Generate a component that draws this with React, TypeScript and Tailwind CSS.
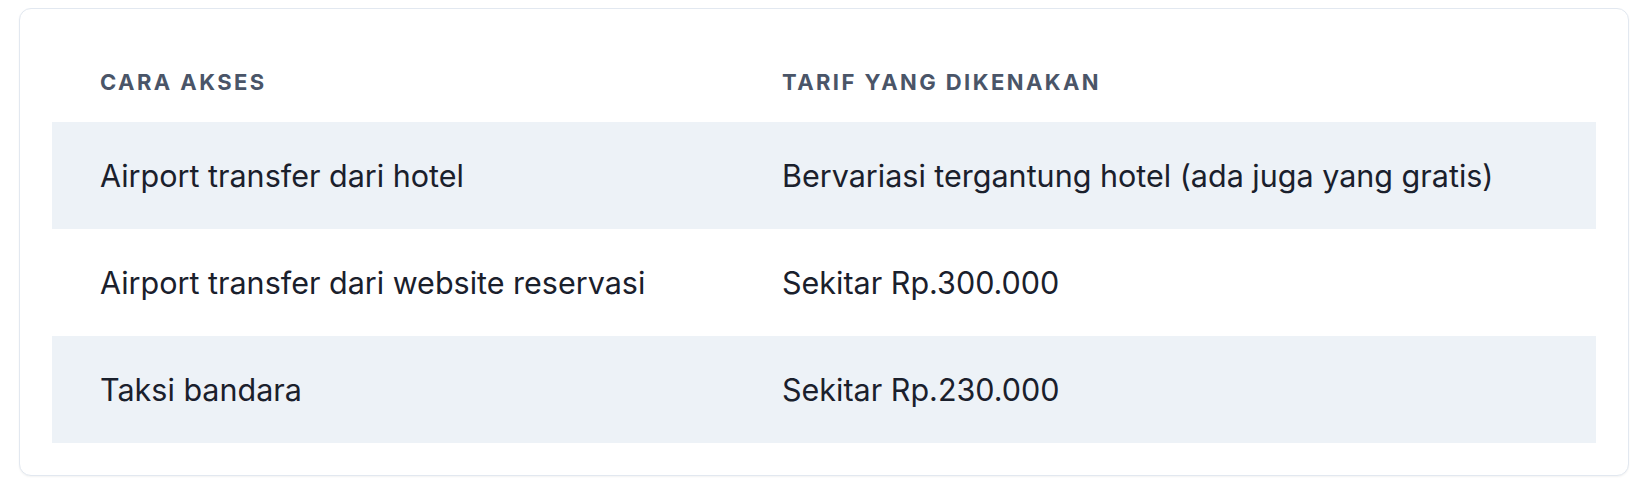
import React from "react";

const rows = [
  { cara: "Airport transfer dari hotel", tarif: "Bervariasi tergantung hotel (ada juga yang gratis)" },
  { cara: "Airport transfer dari website reservasi", tarif: "Sekitar Rp.300.000" },
  { cara: "Taksi bandara", tarif: "Sekitar Rp.230.000" },
];

export default function App() {
  return (
    <div className="min-h-[486px] bg-white pl-[19px] pt-[8px] font-['Inter','Liberation_Sans',sans-serif]">
      <div className="w-[1610px] rounded-xl border border-[#e2e8f0] bg-white p-8 shadow-[0_1px_2px_rgba(0,0,0,0.05)]">
        <table className="w-full border-collapse text-left">
          <thead>
            <tr>
              <th className="w-[682px] h-[81px] px-12 pt-[2px] align-middle text-[22px] font-bold uppercase tracking-[0.11em] text-[#4a5568]">
                Cara Akses
              </th>
              <th className="h-[81px] px-12 pt-[2px] align-middle text-[22px] font-bold uppercase tracking-[0.11em] text-[#4a5568]">
                Tarif yang dikenakan
              </th>
            </tr>
          </thead>
          <tbody>
            {rows.map((r, i) => (
              <tr key={r.cara} className={i % 2 === 0 ? "bg-[#edf2f7]" : "bg-white"}>
                <td className="h-[107px] px-12 align-middle text-[30.5px] text-[#1a202c]">{r.cara}</td>
                <td className="h-[107px] px-12 align-middle text-[30.5px] text-[#1a202c]">{r.tarif}</td>
              </tr>
            ))}
          </tbody>
        </table>
      </div>
    </div>
  );
}
